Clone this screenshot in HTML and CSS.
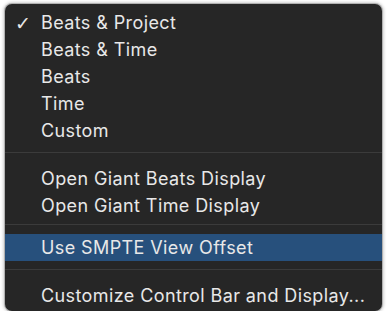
FILE: index.html
```html
<!DOCTYPE html>
<html lang="en">
  <head>
    <meta charset="UTF-8" />
    <meta name="viewport" content="width=device-width, initial-scale=1.0" />
    <title>Display Menu</title>
    <link rel="stylesheet" href="styles.css">
  </head>
  <body>
    <div class="menu">
      <div class="item checked"><span class="check">✓</span>Beats &amp; Project</div>
      <div class="item"><span class="check"></span>Beats &amp; Time</div>
      <div class="item"><span class="check"></span>Beats</div>
      <div class="item"><span class="check"></span>Time</div>
      <div class="item"><span class="check"></span>Custom</div>
      <div class="sep"></div>
      <div class="item"><span class="check"></span>Open Giant Beats Display</div>
      <div class="item"><span class="check"></span>Open Giant Time Display</div>
      <div class="sep tight"></div>
      <div class="item active"><span class="check"></span>Use SMPTE View Offset</div>
      <div class="sep"></div>
      <div class="item"><span class="check"></span>Customize Control Bar and Display...</div>
    </div>
  </body>
</html>
```

FILE: styles.css
```css
body {
  margin: 0;
  background-color: #ffffff;
  font-family: Inter, "Noto Sans", sans-serif;
}

.menu {
  width: 377px;
  margin: 4px 0 0 5px;
  padding: 5px 0 2px;
  background-color: #262626;
  border-radius: 7px;
  box-shadow: 0 0 0 1px #b0b0b0, 0 0 3px 2px rgba(0, 0, 0, 0.18);
  color: #e8e8e8;
  font-size: 18px;
  letter-spacing: 0.4px;
}

.item {
  display: flex;
  align-items: center;
  height: 27px;
  white-space: nowrap;
}

.check {
  width: 26px;
  padding-left: 10px;
  font-family: "DejaVu Sans", sans-serif;
  font-size: 19px;
  letter-spacing: 0;
}

.item.active {
  background-color: #27507c;
}

.sep {
  height: 1px;
  margin: 8px 0 12px;
  background-color: #3b3b3b;
}

.sep.tight {
  margin: 5px 0 9px;
}
```
